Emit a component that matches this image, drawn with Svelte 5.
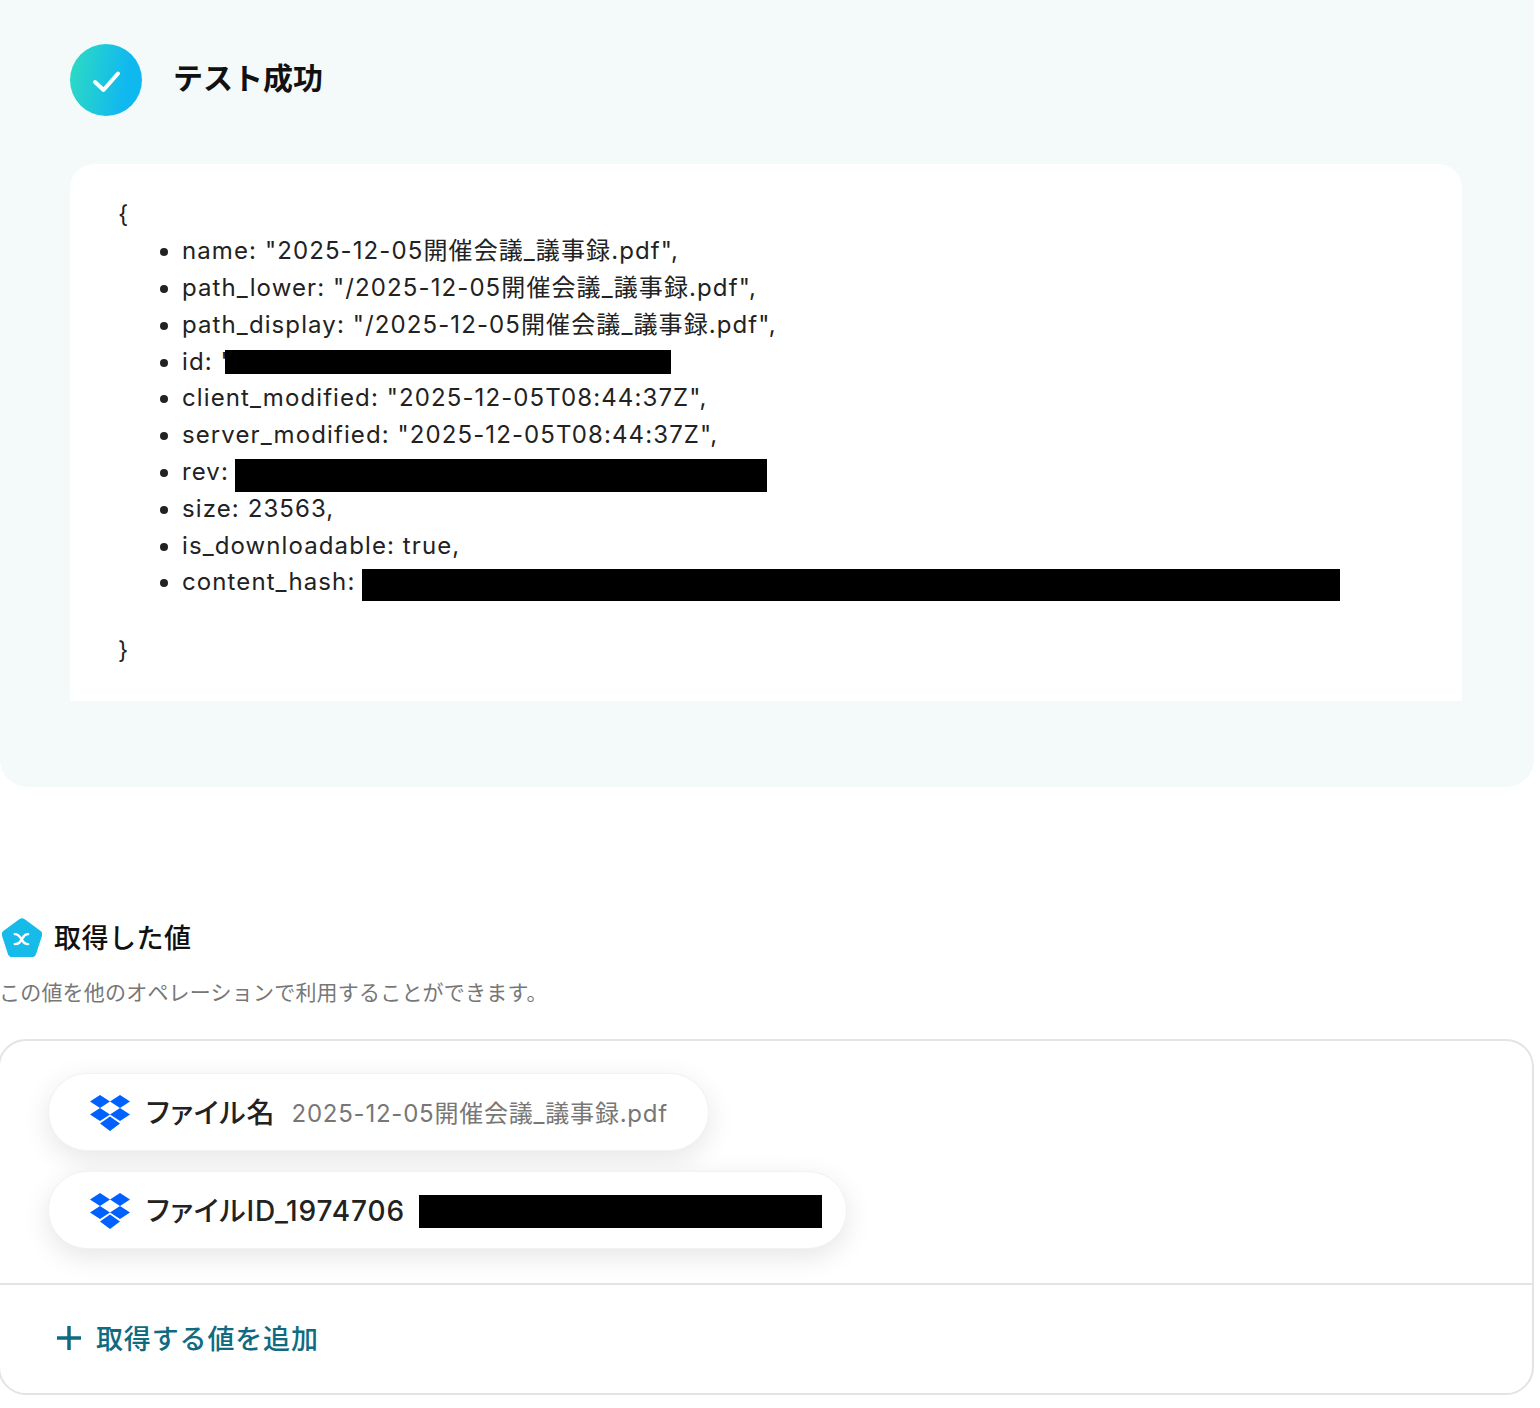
<script lang="ts">
  const fields = [
    { key: 'name', value: '"2025-12-05開催会議_議事録.pdf",' },
    { key: 'path_lower', value: '"/2025-12-05開催会議_議事録.pdf",' },
    { key: 'path_display', value: '"/2025-12-05開催会議_議事録.pdf",' },
    { key: 'id', value: '"', mask: 'id' },
    { key: 'client_modified', value: '"2025-12-05T08:44:37Z",' },
    { key: 'server_modified', value: '"2025-12-05T08:44:37Z",' },
    { key: 'rev', value: '', mask: 'rev' },
    { key: 'size', value: '23563,' },
    { key: 'is_downloadable', value: 'true,' },
    { key: 'content_hash', value: '', mask: 'hash' },
  ]
</script>

{#snippet dropbox()}
  <svg class="dropbox" viewBox="0 0 40 36" aria-hidden="true">
    <path d="M10 0 0 6.500 10 13 20 6.500ZM30 0 20 6.500 30 13 40 6.500ZM0 19.500 10 26 20 19.500 10 13ZM30 13 20 19.500 30 26 40 19.500ZM10 28.500 20 36 30 28.500 20 21.500Z" />
  </svg>
{/snippet}

<div class="page">
  <section class="result">
    <header class="result-head">
      <span class="ok-badge">
        <svg viewBox="0 0 72 72" aria-hidden="true">
          <path d="M25 38 33.500 46 48 29.500" />
        </svg>
      </span>
      <h2>テスト成功</h2>
    </header>
    <div class="json">
      <div class="brace">{'{'}</div>
      <ul>
        {#each fields as f}
          <li>
            {f.key}: {f.value}{#if f.mask}<span class="mask mask-{f.mask}"></span>{/if}
          </li>
        {/each}
      </ul>
      <div class="brace close">{'}'}</div>
    </div>
  </section>

  <section class="values">
    <div class="values-title">
      <svg class="pentagon" viewBox="2 1.500 36 35" aria-hidden="true">
        <path d="M17.500 2.200a4 4 0 0 1 5 0l14 10.200a4 4 0 0 1 1.500 4.600l-5.300 16.400a4 4 0 0 1-3.900 2.800H11.200a4 4 0 0 1-3.900-2.800L2 17a4 4 0 0 1 1.500-4.600Z" fill="#17bbea" />
        <path d="M13.500 15.500c3.500 0 4.500 2 6 4.500s2.500 4.500 6 4.500M25.500 15.500c-3.500 0-4 2-5.500 4.500s-2.500 4.500-6.500 4.500" fill="none" stroke="#fff" stroke-width="2.200" stroke-linecap="round" />
      </svg>
      <h3>取得した値</h3>
    </div>
    <p class="hint">この値を他のオペレーションで利用することができます。</p>

    <div class="box">
      <div class="chips">
        <div class="chip">
          {@render dropbox()}
          <span class="chip-name">ファイル名</span>
          <span class="chip-value">2025-12-05開催会議_議事録.pdf</span>
        </div>
        <div class="chip">
          {@render dropbox()}
          <span class="chip-name">ファイルID_1974706</span>
          <span class="mask mask-chip"></span>
        </div>
      </div>
      <div class="add-row">
        <button type="button" class="add">
          <svg viewBox="0 0 26 26" aria-hidden="true"><path d="M13 1v24M1 13h24" /></svg>
          取得する値を追加
        </button>
      </div>
    </div>
  </section>
</div>

<style>
  :global(body) {
    margin: 0;
    background: #fff;
  }

  .page {
    width: 1534px;
    height: 1408px;
    font-family: Inter, "Noto Sans CJK JP", sans-serif;
    color: #222;
    overflow: hidden;
  }

  .result {
    box-sizing: border-box;
    height: 787px;
    padding: 44px 72px 0 70px;
    background: #f4f9f9;
    border-radius: 0 0 28px 28px;
  }

  .result-head {
    display: flex;
    align-items: center;
    gap: 31px;
    height: 72px;
  }

  .result-head h2 {
    margin: 0 0 8px;
    font-size: 30px;
    font-weight: 700;
    color: #111;
  }

  .ok-badge {
    width: 72px;
    height: 72px;
    border-radius: 50%;
    background: linear-gradient(100deg, #2fdcc0, #10b8f0 75%);
  }

  .ok-badge svg {
    display: block;
    width: 72px;
    height: 72px;
    fill: none;
    stroke: #fff;
    stroke-width: 4;
    stroke-linecap: round;
    stroke-linejoin: round;
  }

  .json {
    box-sizing: border-box;
    height: 537px;
    margin-top: 48px;
    padding: 33px 48px 0;
    background: #fff;
    border-radius: 24px 24px 0 0;
    font-size: 24px;
    line-height: 36.800px;
    letter-spacing: 1.100px;
  }

  .json ul {
    margin: -0.600px 0 0;
    padding: 0 0 0 64px;
  }

  .json li {
    position: relative;
    white-space: nowrap;
  }

  .close {
    margin-top: 32px;
  }

  .mask {
    display: inline-block;
    background: #000;
  }

  .json .mask {
    position: absolute;
  }

  .json .mask-id {
    left: 43px;
    width: 446px;
    height: 24px;
    top: 6px;
  }

  .json .mask-rev {
    left: 53px;
    width: 532px;
    height: 33px;
    top: 5px;
  }

  .json .mask-hash {
    left: 180px;
    width: 978px;
    height: 32px;
    top: 5px;
  }

  .values {
    padding-top: 127px;
  }

  .values-title {
    display: flex;
    align-items: center;
    gap: 12px;
    padding-left: 2px;
    height: 44px;
  }

  .pentagon {
    width: 40px;
    height: 40px;
    margin-top: 4px;
  }

  .values-title h3 {
    margin: 0;
    font-size: 27px;
    font-weight: 500;
    letter-spacing: 0.500px;
    color: #111;
  }

  .hint {
    margin: 19px 0 0 -1px;
    font-size: 21px;
    line-height: 32px;
    letter-spacing: 0.200px;
    color: #777;
    white-space: nowrap;
  }

  .box {
    box-sizing: border-box;
    width: 1536px;
    height: 356px;
    margin: 30px 0 0 -2px;
    border: 2px solid #e4e4e4;
    border-radius: 28px;
  }

  .chips {
    box-sizing: border-box;
    height: 244px;
    padding: 32px 0 0 48px;
    display: flex;
    flex-direction: column;
    align-items: flex-start;
    gap: 20px;
    border-bottom: 2px solid #e4e4e4;
  }

  .chip {
    box-sizing: border-box;
    height: 78px;
    flex: none;
    display: flex;
    align-items: center;
    padding: 0 24px 0 41px;
    background: #fff;
    border: 1px solid #f2f2f2;
    border-radius: 39px;
    box-shadow: 0 8px 28px rgba(0, 0, 0, 0.1);
  }

  .dropbox {
    width: 40px;
    height: 36px;
    fill: #0061fe;
    margin: 2px 16px 0 0;
  }

  .chip-name {
    margin-bottom: 2px;
    font-size: 28px;
    font-weight: 500;
    font-feature-settings: "palt";
    letter-spacing: 0.900px;
    white-space: nowrap;
  }

  .chip-value {
    margin: 0 16px 2px 16px;
    font-size: 24px;
    letter-spacing: 0.780px;
    color: #777;
    white-space: nowrap;
  }

  .mask-chip {
    width: 403px;
    height: 33px;
    margin: 3px 0 0 14px;
  }

  .add-row {
    padding: 33px 0 0 56px;
  }

  .add {
    display: flex;
    align-items: center;
    gap: 14px;
    padding: 0;
    border: 0;
    background: none;
    font: inherit;
    font-size: 27px;
    font-weight: 500;
    letter-spacing: 0.850px;
    color: #0f6b82;
  }

  .add svg {
    width: 26px;
    height: 26px;
    fill: none;
    stroke: #0f6b82;
    stroke-width: 3.500;
  }
</style>
